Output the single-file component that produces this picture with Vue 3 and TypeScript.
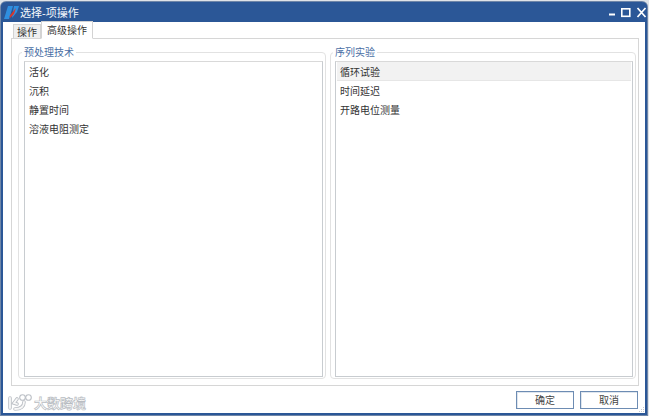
<script setup lang="ts">
const leftItems: string[] = ['活化', '沉积', '静置时间', '溶液电阻测定']
const rightItems: string[] = ['循环试验', '时间延迟', '开路电位测量']
</script>

<template>
  <div class="screen">
    <div class="window">
      <header class="titlebar">
        <svg class="logo" width="15" height="13" viewBox="0 0 15 13">
          <path d="M4 0h5L5 13H0z" fill="#2f8fe0" />
          <path d="M10 0h5l-2 6-5 6z" fill="#2f8fe0" />
          <path d="M5.5 10 12 2 10 8l-4 4z" fill="#d8362c" />
        </svg>
        <span class="title">选择-项操作</span>
        <div class="controls">
          <svg width="40" height="12" viewBox="0 0 40 12">
            <rect x="2" y="7.5" width="6" height="2" fill="#fff" />
            <rect x="14.8" y="2.8" width="8" height="7.5" fill="none" stroke="#fff" stroke-width="1.6" />
            <path d="M30.5 2l8 9M38.5 2l-8 9" stroke="#fff" stroke-width="1.7" fill="none" />
          </svg>
        </div>
      </header>

      <div class="body">
        <div class="tabs">
          <div class="tab">操作</div>
          <div class="tab active">高级操作</div>
        </div>
        <div class="pane">
          <fieldset class="group left">
            <legend>预处理技术</legend>
            <ul class="list">
              <li v-for="item in leftItems" :key="item">{{ item }}</li>
            </ul>
          </fieldset>
          <fieldset class="group right">
            <legend>序列实验</legend>
            <ul class="list">
              <li
                v-for="(item, i) in rightItems"
                :key="item"
                :class="{ selected: i === 0 }"
              >{{ item }}</li>
            </ul>
          </fieldset>
        </div>
        <footer class="footer">
          <button class="btn" type="button">确定</button>
          <button class="btn" type="button">取消</button>
        </footer>
      </div>

      <div class="watermark">
        <svg width="26" height="18" viewBox="0 0 26 18">
          <g fill="none" stroke-linecap="round">
            <g stroke="#bcc0c6" stroke-width="3.6">
              <path d="M3 4v10" />
              <path d="M10 5 7 9l3 1" />
              <path d="M17 8c0 4-3 7-9 7" />
            </g>
            <g stroke="#f8f8f8" stroke-width="1.8">
              <path d="M3 4v10" />
              <path d="M10 5 7 9l3 1" />
              <path d="M17 8c0 4-3 7-9 7" />
            </g>
            <circle cx="15.5" cy="3.5" r="2.8" stroke="#bcc0c6" stroke-width="1.1" />
            <circle cx="21.5" cy="3.5" r="2.8" stroke="#bcc0c6" stroke-width="1.1" />
          </g>
        </svg>
        <span>大数跨境</span>
      </div>

      <svg class="grip" width="7" height="7" viewBox="0 0 7 7">
        <g fill="#c4c8ce">
          <rect x="5" y="1" width="1" height="1" />
          <rect x="3" y="3" width="1" height="1" />
          <rect x="5" y="3" width="1" height="1" />
          <rect x="1" y="5" width="1" height="1" />
          <rect x="3" y="5" width="1" height="1" />
          <rect x="5" y="5" width="1" height="1" />
        </g>
      </svg>
    </div>
  </div>
</template>

<style scoped>
.screen {
  width: 649px;
  height: 416px;
  padding: 2px 2px 1px 1px;
  box-sizing: border-box;
  background: #dfe3e8;
  overflow: hidden;
  font-family: "Liberation Sans", "Noto Sans CJK SC", sans-serif;
}
.window {
  position: relative;
  height: 100%;
  display: flex;
  flex-direction: column;
  box-sizing: border-box;
  background: #fff;
  border: solid #2b5797;
  border-width: 0 2px 2px 2px;
  border-radius: 5px 5px 0 0;
  box-shadow: 0 0 0 1px #6f86a8;
}
.titlebar {
  height: 20px;
  flex: none;
  display: flex;
  align-items: center;
  background: #2b5797;
  color: #fff;
  margin: 0 -2px;
  padding: 0 0 0 3px;
  border-radius: 5px 5px 0 0;
}
.logo {
  flex: none;
}
.title {
  margin-left: 1px;
  padding-top: 1px;
  font-size: 11px;
  line-height: 20px;
  color: #f4f7fb;
}
.controls {
  margin-left: auto;
  display: flex;
  align-items: center;
  height: 100%;
}
.body {
  flex: 1;
  min-height: 0;
  display: flex;
  flex-direction: column;
  padding: 0 6px 2px 8px;
}
.tabs {
  height: 17px;
  flex: none;
  display: flex;
  align-items: flex-end;
  padding-left: 2px;
  position: relative;
  z-index: 1;
  margin-bottom: -1px;
}
.tab {
  box-sizing: border-box;
  height: 15px;
  width: 28px;
  text-align: center;
  font-size: 10px;
  line-height: 15px;
  color: #333;
  background: #efefef;
  border: 1px solid #d3d3d3;
  border-bottom: 1px solid #d6d6d6;
}
.tab.active {
  height: 18px;
  width: 52px;
  background: #fff;
  border-bottom-color: #fff;
  line-height: 18px;
}
.pane {
  box-sizing: border-box;
  height: 348px;
  flex: none;
  display: flex;
  gap: 4px;
  padding: 6px 2px 6px 6px;
  border: 1px solid #d6d6d6;
}
.group {
  min-width: 0;
  margin: 0;
  padding: 0 1px 1px 5px;
  border: 1px solid #e2e2e2;
  border-radius: 4px;
  box-sizing: border-box;
  display: flex;
  flex-direction: column;
}
.group.left {
  width: 308px;
}
.group.right {
  width: 306px;
  padding-left: 4px;
}
legend {
  font-size: 10px;
  line-height: 12px;
  color: #4a6fa5;
  padding: 2px 2px 0;
  margin-left: -2px;
}
.list {
  list-style: none;
  margin: 2px 0 0;
  padding: 0 1px;
  flex: 1;
  min-height: 0;
  box-sizing: border-box;
  border: 1px solid #c8ccd0;
  border-top-color: #d9d9d9;
  background: #fff;
}
.left .list {
  width: 299px;
}
.right .list {
  width: 298px;
}
.list li {
  height: 18.9px;
  line-height: 21px;
  padding-left: 3px;
  font-size: 10px;
  color: #333;
  box-sizing: border-box;
}
.list li.selected {
  background: #f2f2f2;
  border-bottom: 1px solid #e6e6e6;
}
.footer {
  flex: 1;
  display: flex;
  justify-content: flex-end;
  align-items: center;
  gap: 6px;
  padding: 2px 1px 0 0;
}
.btn {
  width: 58px;
  height: 18px;
  padding: 0;
  background: #fff;
  border: 1px solid #6d8cb3;
  box-shadow: inset 1px 1px 0 #dfe6ee;
  font: inherit;
  font-size: 10px;
  color: #444;
}
.watermark {
  position: absolute;
  left: 4px;
  bottom: 1px;
  display: flex;
  align-items: center;
  gap: 1px;
  pointer-events: none;
}
.watermark span {
  font-size: 13px;
  font-weight: 700;
  color: #fff;
  -webkit-text-stroke: 0.7px #b8bcc2;
}
.grip {
  position: absolute;
  right: 0;
  bottom: 0;
}
</style>
